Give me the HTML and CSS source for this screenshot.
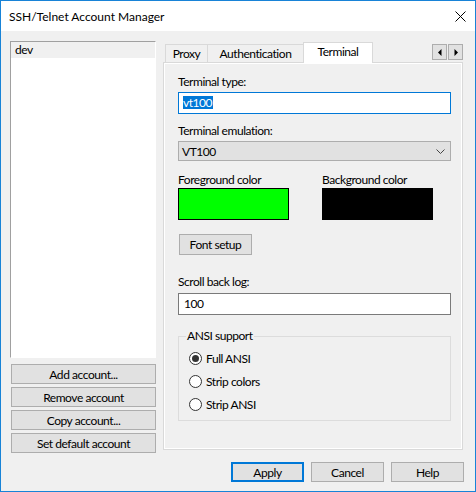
FILE: index.html
```html
<!DOCTYPE html>
<html>
<head>
<meta charset="utf-8">
<title>SSH/Telnet Account Manager</title>
<link rel="stylesheet" href="styles.css">
</head>
<body>
<div class="window">
  <div class="titlebar">
    <span class="title">SSH/Telnet Account Manager</span>
    <svg class="close" width="11" height="11" viewBox="0 0 11 11"><path d="M0.5 0.5 L10.5 10.5 M10.5 0.5 L0.5 10.5" stroke="#000" stroke-width="1" fill="none"/></svg>
  </div>
  <div class="client">
    <div class="main">
      <div class="left">
        <div class="list">
          <div class="list-item">dev</div>
        </div>
        <div class="left-buttons">
          <button class="btn wide">Add account...</button>
          <button class="btn wide">Remove account</button>
          <button class="btn wide">Copy account...</button>
          <button class="btn wide">Set default account</button>
        </div>
      </div>
      <div class="right">
        <div class="tabstrip">
          <div class="tab tab-proxy">Proxy</div>
          <div class="tab tab-auth">Authentication</div>
          <div class="tab tab-term">Terminal</div>
          <div class="spinner">
            <div class="spin-btn"><svg width="4" height="7" viewBox="0 0 4 7"><polygon points="3.5,0 0,3.5 3.5,7" fill="#000"/></svg></div>
            <div class="spin-btn"><svg width="4" height="7" viewBox="0 0 4 7"><polygon points="0.5,0 4,3.5 0.5,7" fill="#000"/></svg></div>
          </div>
        </div>
        <div class="panel">
          <div class="label">Terminal type:</div>
          <div class="textbox focused"><span class="selection">vt100</span></div>
          <div class="label gap-emul">Terminal emulation:</div>
          <div class="dropdown">
            <span>VT100</span>
            <svg width="9" height="5" viewBox="0 0 9 5"><polyline points="0.5,0.5 4.5,4.5 8.5,0.5" stroke="#444" stroke-width="1" fill="none"/></svg>
          </div>
          <div class="colors">
            <div class="color-col">
              <div class="label">Foreground color</div>
              <div class="swatch fg"></div>
            </div>
            <div class="color-col">
              <div class="label">Background color</div>
              <div class="swatch bg"></div>
            </div>
          </div>
          <button class="btn font-btn">Font setup</button>
          <div class="label gap-scroll">Scroll back log:</div>
          <div class="textbox plain">100</div>
          <fieldset class="group">
            <legend>ANSI support</legend>
            <div class="radio-row first"><span class="radio checked"><span class="dot"></span></span><span>Full ANSI</span></div>
            <div class="radio-row"><span class="radio"></span><span>Strip colors</span></div>
            <div class="radio-row"><span class="radio"></span><span>Strip ANSI</span></div>
          </fieldset>
        </div>
      </div>
    </div>
    <div class="footer">
      <button class="btn footer-btn default">Apply</button>
      <button class="btn footer-btn">Cancel</button>
      <button class="btn footer-btn">Help</button>
    </div>
  </div>
</div>
</body>
</html>
```
FILE: styles.css
```css
html, body {
  margin: 0;
  padding: 0;
  background: #f0f0f0;
}
body {
  font-family: Lato, "Liberation Sans", sans-serif;
  font-size: 12px;
  letter-spacing: -0.45px;
  color: #000;
}
.window {
  width: 476px;
  height: 492px;
  box-sizing: border-box;
  border: 1px solid #1883d7;
  display: flex;
  flex-direction: column;
  background: #f0f0f0;
}
.titlebar {
  height: 30px;
  flex: none;
  background: #fff;
  display: flex;
  align-items: center;
  padding: 0 9px 0 8px;
}
.title {
  flex: 1;
  letter-spacing: 0;
}
.close {
  display: block;
}
.client {
  flex: 1;
  display: flex;
  flex-direction: column;
  padding: 10px 11px 9px 9px;
}
.main {
  display: flex;
  gap: 7px;
  height: 412px;
  flex: none;
}
.left {
  width: 146px;
  display: flex;
  flex-direction: column;
}
.list {
  height: 317px;
  box-sizing: border-box;
  background: #fff;
  border: 1px solid;
  border-color: #a0a0a0 #ffffff #ffffff #a0a0a0;
}
.list-item {
  height: 16px;
  line-height: 16px;
  padding-left: 4px;
  background: #f0f0f0;
}
.left-buttons {
  margin-top: 6px;
  margin-left: 1px;
  display: flex;
  flex-direction: column;
  gap: 3px;
}
.btn {
  font: inherit;
  letter-spacing: inherit;
  color: #000;
  height: 20px;
  box-sizing: border-box;
  background: #e1e1e1;
  border: 1px solid #adadad;
  padding: 0;
  margin: 0;
  display: flex;
  align-items: center;
  justify-content: center;
}
.wide {
  width: 145px;
}
.right {
  width: 300px;
  padding-top: 1px;
  display: flex;
  flex-direction: column;
}
.tabstrip {
  height: 20px;
  display: flex;
  align-items: flex-end;
  padding-left: 2px;
}
.tab {
  box-sizing: border-box;
  height: 18px;
  border-top: 1px solid #d9d9d9;
  line-height: 16px;
  padding-top: 1px;
  text-align: center;
  background: #f0f0f0;
}
.tab-proxy {
  width: 43px;
  border-left: 1px solid #d9d9d9;
  border-right: 1px solid #d9d9d9;
}
.tab-auth {
  width: 95px;
}
.tab-term {
  width: 70px;
  height: 21px;
  margin-bottom: -1px;
  border-left: 1px solid #d9d9d9;
  border-right: 1px solid #d9d9d9;
  background: #fff;
  position: relative;
  z-index: 1;
}
.spinner {
  margin-left: auto;
  align-self: flex-start;
  margin-top: 2px;
  display: flex;
  gap: 1px;
}
.spin-btn {
  width: 15px;
  height: 16px;
  box-sizing: border-box;
  border: 1px solid #adadad;
  background: #e1e1e1;
  display: flex;
  align-items: center;
  justify-content: center;
}
.spin-btn svg {
  display: block;
}
.panel {
  height: 388px;
  box-sizing: border-box;
  border: 1px solid #d9d9d9;
  box-shadow: inset 0 0 0 1px #fff;
  background: #f0f0f0;
  padding: 11px 11px 0 14px;
}
.label {
  height: 16px;
  line-height: 16px;
  white-space: nowrap;
}
.textbox {
  margin-top: 2px;
  height: 22px;
  box-sizing: border-box;
  border: 1px solid #7a7a7a;
  background: #fff;
  padding-left: 5px;
  line-height: 20px;
}
.textbox.focused {
  border-color: #0078d7;
  padding-left: 4px;
}
.textbox.plain {
  margin-top: 3px;
}
.selection {
  display: inline-block;
  vertical-align: middle;
  background: #0078d7;
  color: #fff;
  line-height: 13px;
  height: 13px;
  margin-top: -2px;
  padding-right: 1px;
}
.gap-emul {
  margin-top: 9px;
}
.dropdown {
  margin-top: 2px;
  height: 20px;
  box-sizing: border-box;
  border: 1px solid #adadad;
  background: #e1e1e1;
  display: flex;
  align-items: center;
  justify-content: space-between;
  padding: 0 5px 0 3px;
}
.dropdown svg {
  display: block;
}
.colors {
  margin-top: 11px;
  display: grid;
  grid-template-columns: 144px 1fr;
}
.swatch {
  width: 111px;
  height: 32px;
  box-sizing: border-box;
  border: 1px solid #000;
}
.swatch.fg {
  background: #00ff00;
}
.swatch.bg {
  background: #000;
}
.font-btn {
  margin-top: 14px;
  margin-left: 1px;
  width: 73px;
  height: 21px;
}
.gap-scroll {
  margin-top: 19px;
}
.group {
  margin: 13px 0 0;
  padding: 3px 0 4px 7px;
  border: 1px solid #dcdcdc;
  min-width: 0;
}
.group legend {
  padding: 0 1px;
  line-height: 16px;
}
.radio-row {
  height: 23px;
  display: flex;
  align-items: center;
  gap: 4px;
  padding-left: 3px;
}
.radio {
  width: 13px;
  height: 13px;
  box-sizing: border-box;
  border: 1px solid #333;
  border-radius: 50%;
  background: #fff;
  display: flex;
  align-items: center;
  justify-content: center;
  flex: none;
}
.dot {
  width: 7px;
  height: 7px;
  border-radius: 50%;
  background: #333;
}
.footer {
  margin-top: 9px;
  display: flex;
  justify-content: flex-end;
  gap: 7px;
}
.footer-btn {
  width: 73px;
  height: 20px;
}
.footer-btn.default {
  border: 2px solid #0078d7;
}
```
